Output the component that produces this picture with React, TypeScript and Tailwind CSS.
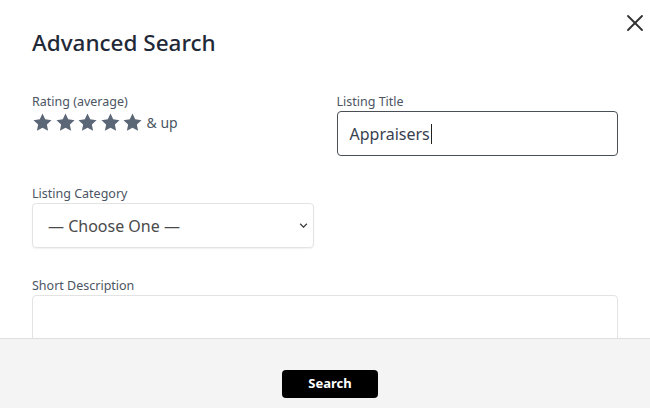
import { X } from 'lucide-react'

function Star() {
  return (
    <svg viewBox="0 0 24 24" className="h-[21px] w-[21px]" fill="#5b6676">
      <path d="M12 1.8l3.1 6.6 7.2.9-5.3 5 1.4 7.1L12 17.9l-6.4 3.5 1.4-7.1-5.3-5 7.2-.9z" />
    </svg>
  )
}

function Chevron() {
  return (
    <svg viewBox="0 0 10 6" className="h-[5px] w-[9px]" fill="none" stroke="#444" strokeWidth="1.6">
      <path d="M1 1l4 4 4-4" />
    </svg>
  )
}

export default function App() {
  return (
    <div className="flex h-[408px] w-[650px] flex-col overflow-hidden bg-white font-['Noto_Sans',sans-serif]">
      {/* Body */}
      <div className="relative flex-1 overflow-hidden px-8">
        <button className="absolute right-[1px] top-[9px] text-[#333]">
          <X className="h-[28px] w-[28px]" strokeWidth={1.6} />
        </button>

        <h2 className="pt-[27px] text-[22.5px] leading-[32px] font-medium text-[#1f2937]">Advanced Search</h2>

        <div className="mt-[33px] grid grid-cols-2 gap-x-[23px]">
          {/* Rating */}
          <div>
            <label className="block text-[12.5px] leading-[19px] text-[#4b5563]">Rating (average)</label>
            <div className="mt-[1px] flex items-center gap-[1.5px]">
              <Star />
              <Star />
              <Star />
              <Star />
              <Star />
              <span className="ml-[2px] text-[14px] text-[#4b5563]">&amp; up</span>
            </div>
          </div>

          {/* Listing title */}
          <div>
            <label className="block text-[12.5px] leading-[19px] text-[#4b5563]">Listing Title</label>
            <div className="flex h-[45px] items-center rounded-[4px] border border-[#4a4f57] px-3 text-[16px] text-[#374151]">
              Appraisers
              <span className="ml-[1px] inline-block h-[20px] w-px bg-[#222]" />
            </div>
          </div>

          {/* Category */}
          <div className="mt-[28px]">
            <label className="block text-[12.5px] leading-[19px] text-[#4b5563]">Listing Category</label>
            <div className="flex h-[45px] items-center justify-between rounded-[4px] border border-[#e3e3e3] pl-[15px] pr-[5px] text-[16px] text-[#4a4a4a] shadow-[0_1px_2px_rgba(0,0,0,0.06)]">
              <span>— Choose One —</span>
              <Chevron />
            </div>
          </div>
          <div />

          {/* Short description */}
          <div className="col-span-2 mt-[28px]">
            <label className="block text-[12.5px] leading-[19px] text-[#4b5563]">Short Description</label>
            <div className="h-[90px] rounded-[4px] border border-[#e3e3e3]" />
          </div>
        </div>
      </div>

      {/* Footer */}
      <div className="flex h-[70px] shrink-0 justify-center border-t border-[#dedede] bg-[#f4f4f4] pl-[10px] pt-[31px]">
        <button className="h-[28px] w-[96px] rounded-[4px] bg-black text-[13px] font-bold text-white">Search</button>
      </div>
    </div>
  )
}
